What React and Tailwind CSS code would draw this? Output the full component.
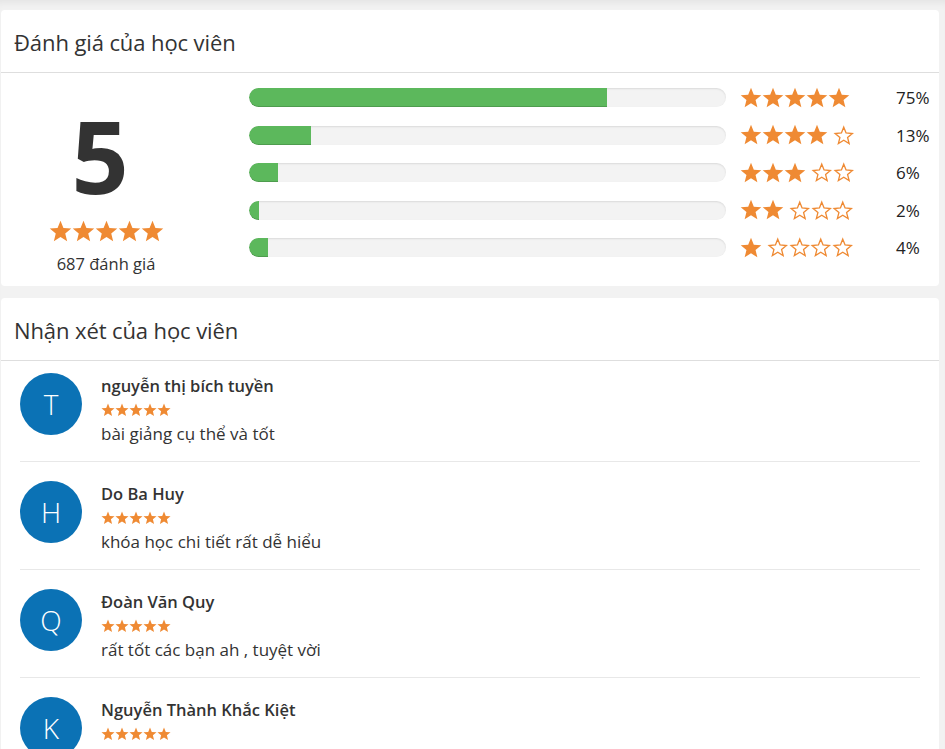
import React from "react";

const STAR = "12,0.8 15.06,8.39 23.22,8.95 16.95,14.21 18.94,22.15 12,17.8 5.06,22.15 7.05,14.21 0.78,8.95 8.94,8.39";

const Star = ({ size, filled = true }) => (
  <svg width={size} height={size} viewBox="0 0 24 24" className="block shrink-0">
    {filled ? (
      <polygon points={STAR} fill="#ef8a33" />
    ) : (
      <polygon points="12,2.4 14.6,8.9 21.6,9.5 16.3,14 18,20.7 12,17 6,20.7 7.7,14 2.4,9.5 9.4,8.9" fill="none" stroke="#ef8a33" strokeWidth="1.5" strokeLinejoin="miter" />
    )}
  </svg>
);

const breakdown = [
  { stars: 5, pct: 75 },
  { stars: 4, pct: 13 },
  { stars: 3, pct: 6 },
  { stars: 2, pct: 2 },
  { stars: 1, pct: 4 },
];

const reviews = [
  { letter: "T", name: "nguyễn thị bích tuyền", text: "bài giảng cụ thể và tốt" },
  { letter: "H", name: "Do Ba Huy", text: "khóa học chi tiết rất dễ hiểu" },
  { letter: "Q", name: "Đoàn Văn Quy", text: "rất tốt các bạn ah , tuyệt vời" },
  { letter: "K", name: "Nguyễn Thành Khắc Kiệt", text: "khóa học rất hay và bổ ích" },
];

export default function App() {
  return (
    <div
      className="min-h-screen bg-[#f2f2f2] pl-[1px] pr-[6px] pt-[10px] text-[#333] shadow-[inset_0_8px_8px_-6px_rgba(0,0,0,0.07)]"
      style={{ fontFamily: '"Open Sans", "Noto Sans", sans-serif' }}
    >
      {/* Ratings */}
      <div className="rounded-[4px] bg-white">
        <div className="flex h-[63px] items-center border-b border-[#dedede] px-[13px] pt-[2px]">
          <h2 className="text-[22px] font-normal tracking-[-0.1px] text-[#333]">Đánh giá của học viên</h2>
        </div>
        <div className="flex h-[213px]">
          <div className="flex w-[210px] flex-col items-center pt-[32px]">
            <div className="mr-[12px] text-[100px] font-bold leading-[100px] text-[#333]">5</div>
            <div className="mt-[15px] flex">
              {[0, 1, 2, 3, 4].map((i) => (
                <Star key={i} size={23} />
              ))}
            </div>
            <div className="mt-[10px] text-[16.5px] leading-[22px] text-[#333]">687 đánh giá</div>
          </div>
          <div className="ml-[38px] flex flex-col pt-[6px]">
            {breakdown.map((row) => (
              <div key={row.stars} className="flex h-[37.5px] items-center">
                <div className="h-[19px] w-[477px] overflow-hidden rounded-full bg-[#f3f3f3] shadow-[inset_0_1px_2px_rgba(0,0,0,0.1)]">
                  <div
                    className="h-full rounded-l-full bg-[#5cb85c] shadow-[inset_0_-1px_0_rgba(0,0,0,0.15)]"
                    style={{ width: `${row.pct}%` }}
                  />
                </div>
                <div className="ml-[14px] flex w-[156px] items-center">
                  <div className="flex">
                    {Array.from({ length: row.stars }).map((_, i) => (
                      <Star key={i} size={22} />
                    ))}
                  </div>
                  {row.stars < 5 && (
                    <div className="ml-[5px] flex">
                      {Array.from({ length: 5 - row.stars }).map((_, i) => (
                        <Star key={i} size={21.5} filled={false} />
                      ))}
                    </div>
                  )}
                </div>
                <div className="text-[17px] text-[#222]">{row.pct}%</div>
              </div>
            ))}
          </div>
        </div>
      </div>

      {/* Reviews */}
      <div className="mt-[12px] rounded-[4px] bg-white">
        <div className="flex h-[63px] items-center border-b border-[#dedede] px-[13px] pt-[2px]">
          <h2 className="text-[22px] font-normal tracking-[-0.1px] text-[#333]">Nhận xét của học viên</h2>
        </div>
        <div className="px-[19px] pt-[12px]">
          {reviews.map((r, idx) => (
            <div
              key={r.name}
              className={`flex border-b border-[#e8e8e8] pb-[15px] ${idx === 0 ? "pt-0" : "pt-[19px]"}`}
            >
              <div className="flex h-[62px] w-[62px] shrink-0 items-center justify-center rounded-full bg-[#0b72b5] text-[28px] font-light text-white">
                {r.letter}
              </div>
              <div className="ml-[19px] mt-[1px]">
                <div className="text-[16.5px] font-semibold leading-[24px] text-[#333]">{r.name}</div>
                <div className="flex h-[24px] items-center">
                  {[0, 1, 2, 3, 4].map((i) => (
                    <Star key={i} size={14} />
                  ))}
                </div>
                <div className="text-[17px] leading-[24px] text-[#333]">{r.text}</div>
              </div>
            </div>
          ))}
        </div>
      </div>
    </div>
  );
}
